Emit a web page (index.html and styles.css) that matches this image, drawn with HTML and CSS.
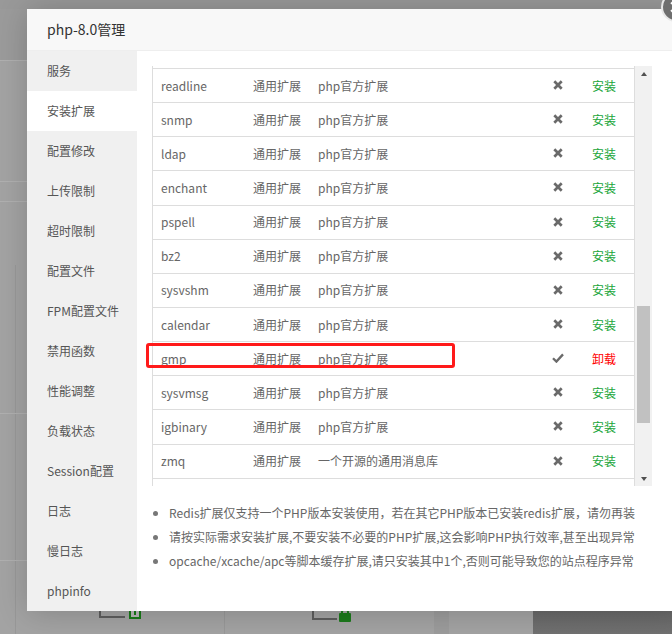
FILE: index.html
```html
<!DOCTYPE html>
<html lang="zh-CN">
<head>
<meta charset="utf-8">
<title>php-8.0管理</title>
<link rel="stylesheet" href="styles.css">
</head>
<body>
<div class="page">
  <div class="page-bottom">
    <div class="bg-icon bg-icon-a"><span class="bg-l"></span><span class="bg-warn"><i></i></span></div>
    <div class="bg-icon bg-icon-b"><span class="bg-l"></span><span class="bg-lock"><i></i></span></div>
  </div>
</div>

<div class="modal">
  <div class="modal-title">php-8.0管理</div>
  <div class="modal-body">
    <ul class="side">
      <li>服务</li>
      <li class="active">安装扩展</li>
      <li>配置修改</li>
      <li>上传限制</li>
      <li>超时限制</li>
      <li>配置文件</li>
      <li>FPM配置文件</li>
      <li>禁用函数</li>
      <li>性能调整</li>
      <li>负载状态</li>
      <li>Session配置</li>
      <li>日志</li>
      <li>慢日志</li>
      <li>phpinfo</li>
    </ul>
    <div class="content">
      <div class="table-wrap">
        <div class="table-scroll">
          <div class="rows">
            <div class="row"><span class="c-name">readline</span><span class="c-type">通用扩展</span><span class="c-desc">php官方扩展</span><span class="c-st"><svg class="ic-x" viewBox="0 0 10 10"><path d="M1.3 1.3L8.7 8.7M8.7 1.3L1.3 8.7"/></svg></span><span class="c-act install">安装</span></div>
            <div class="row"><span class="c-name">snmp</span><span class="c-type">通用扩展</span><span class="c-desc">php官方扩展</span><span class="c-st"><svg class="ic-x" viewBox="0 0 10 10"><path d="M1.3 1.3L8.7 8.7M8.7 1.3L1.3 8.7"/></svg></span><span class="c-act install">安装</span></div>
            <div class="row"><span class="c-name">ldap</span><span class="c-type">通用扩展</span><span class="c-desc">php官方扩展</span><span class="c-st"><svg class="ic-x" viewBox="0 0 10 10"><path d="M1.3 1.3L8.7 8.7M8.7 1.3L1.3 8.7"/></svg></span><span class="c-act install">安装</span></div>
            <div class="row"><span class="c-name">enchant</span><span class="c-type">通用扩展</span><span class="c-desc">php官方扩展</span><span class="c-st"><svg class="ic-x" viewBox="0 0 10 10"><path d="M1.3 1.3L8.7 8.7M8.7 1.3L1.3 8.7"/></svg></span><span class="c-act install">安装</span></div>
            <div class="row"><span class="c-name">pspell</span><span class="c-type">通用扩展</span><span class="c-desc">php官方扩展</span><span class="c-st"><svg class="ic-x" viewBox="0 0 10 10"><path d="M1.3 1.3L8.7 8.7M8.7 1.3L1.3 8.7"/></svg></span><span class="c-act install">安装</span></div>
            <div class="row"><span class="c-name">bz2</span><span class="c-type">通用扩展</span><span class="c-desc">php官方扩展</span><span class="c-st"><svg class="ic-x" viewBox="0 0 10 10"><path d="M1.3 1.3L8.7 8.7M8.7 1.3L1.3 8.7"/></svg></span><span class="c-act install">安装</span></div>
            <div class="row"><span class="c-name">sysvshm</span><span class="c-type">通用扩展</span><span class="c-desc">php官方扩展</span><span class="c-st"><svg class="ic-x" viewBox="0 0 10 10"><path d="M1.3 1.3L8.7 8.7M8.7 1.3L1.3 8.7"/></svg></span><span class="c-act install">安装</span></div>
            <div class="row"><span class="c-name">calendar</span><span class="c-type">通用扩展</span><span class="c-desc">php官方扩展</span><span class="c-st"><svg class="ic-x" viewBox="0 0 10 10"><path d="M1.3 1.3L8.7 8.7M8.7 1.3L1.3 8.7"/></svg></span><span class="c-act install">安装</span></div>
            <div class="row"><span class="c-name">gmp</span><span class="c-type">通用扩展</span><span class="c-desc">php官方扩展</span><span class="c-st"><svg class="ic-ok" viewBox="0 0 12 10"><path d="M1 5.2L4.4 8.6L11 1.4"/></svg></span><span class="c-act uninstall">卸载</span></div>
            <div class="row"><span class="c-name">sysvmsg</span><span class="c-type">通用扩展</span><span class="c-desc">php官方扩展</span><span class="c-st"><svg class="ic-x" viewBox="0 0 10 10"><path d="M1.3 1.3L8.7 8.7M8.7 1.3L1.3 8.7"/></svg></span><span class="c-act install">安装</span></div>
            <div class="row"><span class="c-name">igbinary</span><span class="c-type">通用扩展</span><span class="c-desc">php官方扩展</span><span class="c-st"><svg class="ic-x" viewBox="0 0 10 10"><path d="M1.3 1.3L8.7 8.7M8.7 1.3L1.3 8.7"/></svg></span><span class="c-act install">安装</span></div>
            <div class="row"><span class="c-name">zmq</span><span class="c-type">通用扩展</span><span class="c-desc">一个开源的通用消息库</span><span class="c-st"><svg class="ic-x" viewBox="0 0 10 10"><path d="M1.3 1.3L8.7 8.7M8.7 1.3L1.3 8.7"/></svg></span><span class="c-act install">安装</span></div>
            <div class="row"><span class="c-name"></span><span class="c-type"></span><span class="c-desc"></span><span class="c-st"></span><span class="c-act"></span></div>
          </div>
        </div>
        <div class="scrollbar">
          <div class="sb-btn"><span class="tri-up"></span></div>
          <div class="sb-track"><div class="sb-thumb"></div></div>
          <div class="sb-btn sb-btn-down"><span class="tri-down"></span></div>
        </div>
        <div class="mark"></div>
      </div>
      <ul class="notes">
        <li>Redis扩展仅支持一个PHP版本安装使用，若在其它PHP版本已安装redis扩展，请勿再装</li>
        <li>请按实际需求安装扩展,不要安装不必要的PHP扩展,这会影响PHP执行效率,甚至出现异常</li>
        <li>opcache/xcache/apc等脚本缓存扩展,请只安装其中1个,否则可能导致您的站点程序异常</li>
      </ul>
    </div>
  </div>
</div>

<div class="close-btn"><svg viewBox="0 0 30 30"><path d="M9.5 9.5L20.5 20.5M20.5 9.5L9.5 20.5"/></svg></div>
</body>
</html>
```

FILE: styles.css
```css
* {
  box-sizing: border-box;
  margin: 0;
  padding: 0;
}

html,
body {
  width: 672px;
  height: 634px;
  overflow: hidden;
}

body {
  position: relative;
  font-family: "Noto Sans CJK SC", "Noto Sans", sans-serif;
  background-color: #a3a3a3;
  background-image:
    linear-gradient(#999999, #999999),
    linear-gradient(#b0b0b0, #b0b0b0),
    linear-gradient(#b0b0b0, #b0b0b0),
    linear-gradient(#b0b0b0, #b0b0b0),
    linear-gradient(#b0b0b0, #b0b0b0),
    linear-gradient(#b0b0b0, #b0b0b0),
    linear-gradient(#989898, #989898),
    linear-gradient(#9c9c9c, #9c9c9c),
    linear-gradient(#989898, #989898),
    linear-gradient(to bottom, #686868, #717171),
    linear-gradient(#9b9b9b, #9b9b9b);
  background-size:
    672px 9px,
    27px 1px,
    27px 1px,
    27px 1px,
    27px 1px,
    27px 1px,
    1px 400px,
    15px 23px,
    1px 23px,
    139px 23px,
    27px 52px;
  background-position:
    0 0,
    0 60px,
    0 181px,
    0 201px,
    0 413px,
    0 560px,
    15px 265px,
    434px 611px,
    224px 611px,
    533px 611px,
    0 9px;
  background-repeat: no-repeat;
}

/* underlying page */
.page {
  width: 672px;
  height: 634px;
  padding-top: 606px;
}

.page-bottom {
  display: flex;
  padding-left: 99px;
}

.bg-icon {
  display: flex;
  align-items: flex-start;
}

.bg-icon-b {
  margin-left: 171px;
}

.bg-l {
  display: block;
  width: 26px;
  height: 12px;
  border-left: 2px solid #5e5e5e;
  border-bottom: 2px solid #5e5e5e;
}

.bg-warn {
  display: flex;
  justify-content: center;
  width: 12px;
  height: 13px;
  margin-left: 4px;
  border: 2px solid #177a17;
  background: #b8b8b8;
}

.bg-warn i {
  display: block;
  width: 2px;
  height: 5px;
  margin-top: 2px;
  background: #177a17;
}

.bg-icon-b .bg-l {
  height: 14px;
  width: 25px;
}

.bg-lock {
  display: block;
  position: relative;
  width: 12px;
  height: 9px;
  margin-left: 2px;
  margin-top: 7px;
  background: #1c7a1c;
  border-radius: 1px;
}

.bg-lock i {
  position: absolute;
  left: 2px;
  top: -5px;
  width: 8px;
  height: 7px;
  border: 2px solid #1c7a1c;
  border-bottom: none;
  border-radius: 4px 4px 0 0;
}

/* modal */
.modal {
  position: absolute;
  left: 27px;
  top: 9px;
  width: 660px;
  height: 602px;
  background: #fff;
  box-shadow: 1px 1px 30px rgba(0, 0, 0, 0.2);
  display: flex;
  flex-direction: column;
}

.modal-title {
  height: 42px;
  line-height: 41px;
  padding-left: 20px;
  font-size: 14px;
  color: #333;
  background: #f8f8f8;
  border-bottom: 1px solid #eee;
}

.modal-body {
  flex: 1;
  display: flex;
  min-height: 0;
}

.side {
  list-style: none;
  width: 110px;
  background: #f0f0f0;
}

.side li {
  height: 40px;
  line-height: 40px;
  padding-left: 20px;
  font-size: 12px;
  color: #555;
}

.side li.active {
  background: #fff;
}

.content {
  flex: 1;
  padding: 15px 0 0 15px;
}

.table-wrap {
  position: relative;
  display: flex;
  height: 420px;
}

.table-scroll {
  width: 483px;
  height: 420px;
  overflow: hidden;
  border-left: 1px solid #ddd;
  border-right: 1px solid #ddd;
}

.rows {
  padding-top: 2px;
}

.row {
  display: grid;
  grid-template-columns: 91px 65px 227px 44px 54px;
  align-items: center;
  height: 34.15px;
  padding-bottom: 1px;
  border-top: 1px solid #ddd;
  font-size: 12px;
  color: #666;
}

.c-name {
  padding-left: 8px;
}

.c-type,
.c-desc {
  padding-left: 9px;
}

.c-st {
  display: flex;
  justify-content: center;
  align-items: center;
}

.c-act {
  padding-left: 12px;
}

.install {
  color: #20a53a;
}

.uninstall {
  color: #ff0000;
}

.ic-x {
  width: 10px;
  height: 10px;
  fill: none;
  stroke: #6a6a6a;
  stroke-width: 2.7;
}

.ic-ok {
  width: 12px;
  height: 10px;
  fill: none;
  stroke: #6a6a6a;
  stroke-width: 2.3;
}

/* fake scrollbar */
.scrollbar {
  width: 17px;
  height: 420px;
  background: #f1f1f1;
  display: flex;
  flex-direction: column;
}

.sb-btn {
  height: 17px;
  display: flex;
  justify-content: center;
  padding-top: 6px;
}

.sb-btn-down {
  padding-top: 8px;
}

.tri-up {
  width: 0;
  height: 0;
  border-left: 3.5px solid transparent;
  border-right: 3.5px solid transparent;
  border-bottom: 4px solid #505050;
}

.tri-down {
  width: 0;
  height: 0;
  border-left: 3.5px solid transparent;
  border-right: 3.5px solid transparent;
  border-top: 4px solid #505050;
}

.sb-track {
  flex: 1;
  padding: 223px 2px 0 2px;
}

.sb-thumb {
  height: 117px;
  background: #c1c1c1;
}

/* highlight annotation */
.mark {
  position: absolute;
  left: -6px;
  top: 277px;
  width: 309px;
  height: 25px;
  border: 3px solid #ff1a1a;
  border-radius: 3px;
}

.notes {
  list-style: none;
  margin-top: 15px;
}

.notes li {
  position: relative;
  padding-left: 17px;
  line-height: 24px;
  font-size: 12px;
  color: #666;
  white-space: nowrap;
}

.notes li::before {
  content: "";
  position: absolute;
  left: 1px;
  top: 10px;
  width: 5px;
  height: 5px;
  border-radius: 50%;
  background: #777;
}

/* close button of the layer */
.close-btn {
  position: absolute;
  left: 661px;
  top: -8px;
  width: 30px;
  height: 30px;
  border-radius: 50%;
  background: #6e6e6e;
  border: 2px solid #e6e6e6;
}

.close-btn svg {
  width: 26px;
  height: 26px;
  fill: none;
  stroke: #fff;
  stroke-width: 3;
}
```
